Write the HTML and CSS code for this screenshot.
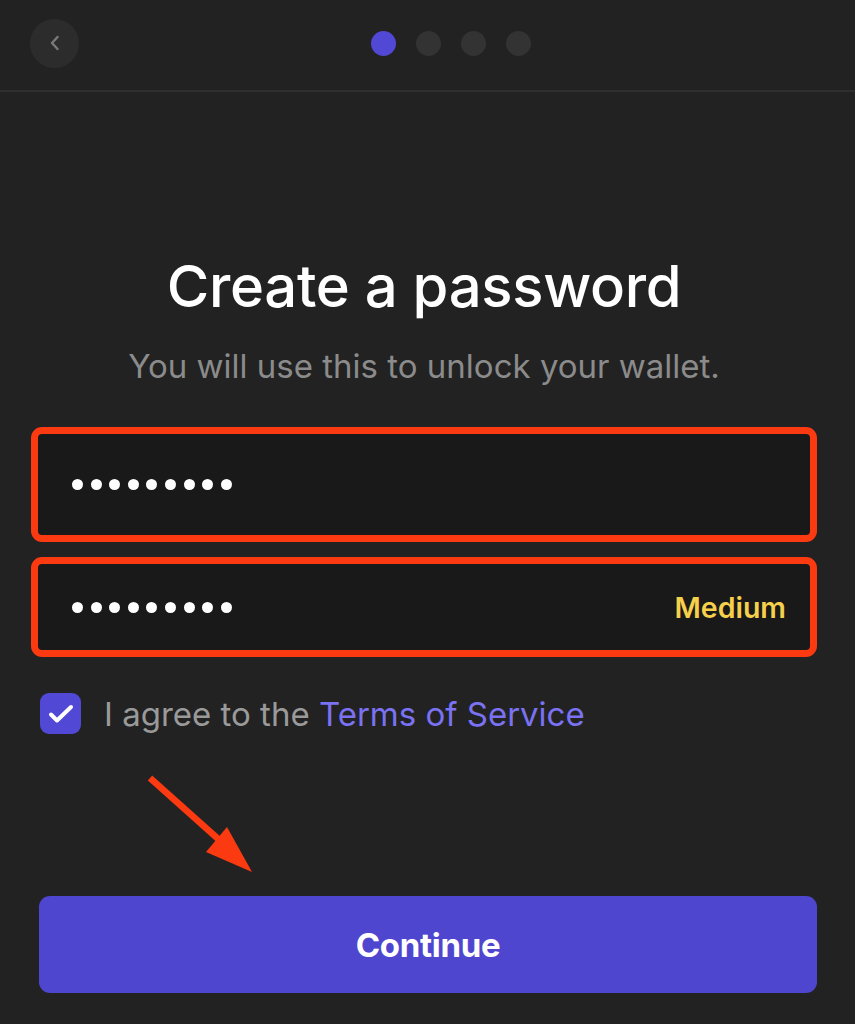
FILE: index.html
```html
<!DOCTYPE html>
<html lang="en">
<head>
<meta charset="utf-8">
<title>Create a password</title>
<link rel="stylesheet" href="styles.css">
</head>
<body>
<div class="screen">
  <header class="topbar">
    <div class="topbar-left">
      <button class="back-btn" aria-label="Back">
        <svg width="14" height="18" viewBox="0 0 14 18"><path d="M9.5 3 L4 9 L9.5 15" fill="none" stroke="#7a7a7a" stroke-width="2.4" stroke-linecap="round" stroke-linejoin="round"/></svg>
      </button>
    </div>
    <div class="steps">
      <span class="step active"></span>
      <span class="step"></span>
      <span class="step"></span>
      <span class="step"></span>
    </div>
    <div></div>
  </header>

  <main class="content">
    <h1 class="title">Create a password</h1>
    <p class="subtitle">You will use this to unlock your wallet.</p>

    <div class="field field-tall">
      <div class="dots"><i></i><i></i><i></i><i></i><i></i><i></i><i></i><i></i><i></i></div>
    </div>
    <div class="field field-short">
      <div class="dots"><i></i><i></i><i></i><i></i><i></i><i></i><i></i><i></i><i></i></div>
      <span class="strength">Medium</span>
    </div>

    <label class="agree">
      <span class="checkbox">
        <svg width="30" height="22" viewBox="0 0 30 22"><path d="M5 11.5 L11 17.5 L25 4" fill="none" stroke="#fff" stroke-width="4" stroke-linecap="round" stroke-linejoin="round"/></svg>
      </span>
      <span class="agree-text">I agree to the <span class="link">Terms of Service</span></span>
    </label>

    <div class="spacer"></div>

    <button class="continue">Continue</button>
  </main>

  <svg class="annot-arrow" width="130" height="110" viewBox="0 0 130 110">
    <line x1="10" y1="8" x2="95" y2="84" stroke="#fc3a11" stroke-width="6.5" stroke-linecap="butt"/>
    <polygon points="112,102 66,82 87,57" fill="#fc3a11"/>
  </svg>
</div>
</body>
</html>
```

FILE: styles.css
```css
* { box-sizing: border-box; }

html, body {
  margin: 0;
  padding: 0;
  background: #222222;
}

body {
  font-family: Inter, "Noto Sans", "DejaVu Sans", sans-serif;
  color: #ffffff;
}

.screen {
  position: relative;
  width: 855px;
  height: 1024px;
  overflow: hidden;
}

.topbar {
  height: 92px;
  border-bottom: 2px solid #2f2f2f;
  display: grid;
  grid-template-columns: 1fr auto 1fr;
  align-items: center;
  padding-bottom: 4px;
}

.topbar-left {
  padding-left: 30px;
  display: flex;
  align-items: center;
}

.back-btn {
  width: 49px;
  height: 49px;
  border-radius: 50%;
  border: 0;
  background: #2c2c2c;
  display: flex;
  align-items: center;
  justify-content: center;
  padding: 0;
}

.steps {
  display: flex;
  gap: 20px;
  align-items: center;
  padding-left: 46px;
}

.step {
  width: 25px;
  height: 25px;
  border-radius: 50%;
  background: #333333;
}

.step.active {
  background: #5148d6;
}

.content {
  display: flex;
  flex-direction: column;
  padding: 160px 38px 31px 31px;
  height: calc(1024px - 92px);
}

.title {
  margin: 0;
  text-align: center;
  font-size: 58px;
  line-height: 68px;
  font-weight: 500;
  letter-spacing: -0.3px;
  color: #ffffff;
}

.subtitle {
  margin: 28px 0 0;
  text-align: center;
  font-size: 33px;
  line-height: 36px;
  font-weight: 400;
  color: #8b8b8b;
}

.field {
  border: 7px solid #fc3a11;
  border-radius: 11px;
  background: #191919;
  display: flex;
  align-items: center;
  justify-content: space-between;
  padding: 0 24px 0 34px;
  flex-shrink: 0;
}

.field-tall {
  margin-top: 43px;
  height: 115px;
}

.field-short {
  margin-top: 15px;
  height: 100px;
}

.dots {
  display: flex;
  gap: 7.6px;
}

.dots i {
  display: block;
  width: 11px;
  height: 11px;
  border-radius: 50%;
  background: #ffffff;
}

.strength {
  font-size: 28.5px;
  font-weight: 600;
  color: #f6cf4b;
}

.agree {
  margin-top: 36px;
  margin-left: 9px;
  display: flex;
  align-items: center;
  gap: 23px;
}

.checkbox {
  width: 41px;
  height: 41px;
  border-radius: 9px;
  background: #5148d6;
  display: flex;
  align-items: center;
  justify-content: center;
}

.agree-text {
  font-size: 33px;
  line-height: 40px;
  color: #9a9a9a;
}

.link {
  color: #7a72f2;
}

.spacer {
  flex: 1;
}

.continue {
  margin-left: 8px;
  height: 97px;
  flex-shrink: 0;
  border: 0;
  border-radius: 11px;
  background: #4f46cf;
  color: #ffffff;
  font-family: Inter, "Noto Sans", sans-serif;
  font-size: 33px;
  font-weight: 700;
  letter-spacing: -0.3px;
}

.annot-arrow {
  position: absolute;
  left: 140px;
  top: 770px;
}
```
